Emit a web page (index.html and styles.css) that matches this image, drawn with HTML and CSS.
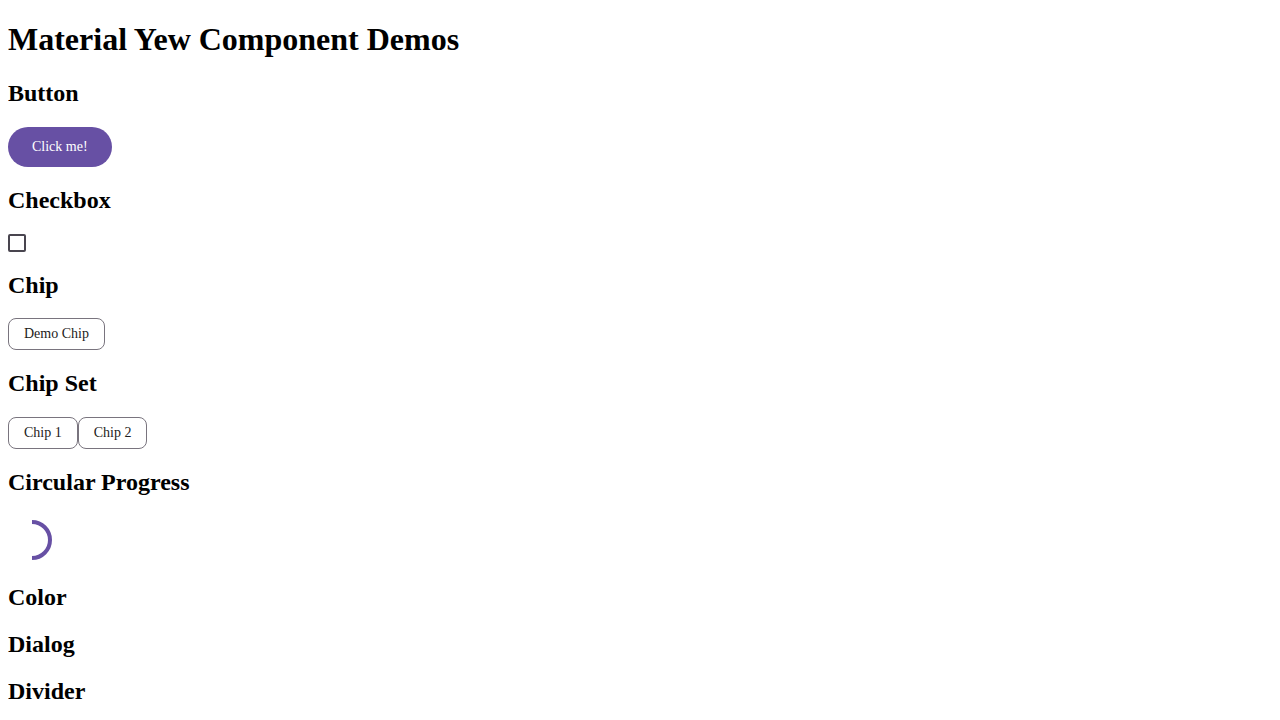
FILE: index.html
```html
<!DOCTYPE html>
<html>
<head>
<meta charset="utf-8">
<title>Material Yew Component Demos</title>
<link rel="stylesheet" href="styles.css">
</head>
<body>
<h1>Material Yew Component Demos</h1>
<h2>Button</h2>
<div class="demo"><button class="filled-btn">Click me!</button></div>
<h2>Checkbox</h2>
<div class="demo"><span class="checkbox"></span></div>
<h2>Chip</h2>
<div class="demo"><span class="chip">Demo Chip</span></div>
<h2>Chip Set</h2>
<div class="demo chipset"><span class="chip">Chip 1</span><span class="chip">Chip 2</span></div>
<h2>Circular Progress</h2>
<div class="demo">
<svg class="progress" width="48" height="48" viewBox="0 0 48 48"><path d="M24 6 A18 18 0 0 1 24 42" fill="none" stroke="#6750a4" stroke-width="4"/></svg>
</div>
<h2>Color</h2>
<h2>Dialog</h2>
<h2>Divider</h2>
</body>
</html>
```
FILE: styles.css
```css
body {
  margin: 8px;
  font-family: "Liberation Serif", serif;
  background: #fff;
  color: #000;
}
h1 { font-size: 32px; margin: 13.44px 0 21.44px; }
h2 { font-size: 24px; margin: 19.92px 0; }
.demo { display: flex; align-items: flex-start; }
.filled-btn {
  height: 40px;
  padding: 0 24px;
  border: none;
  border-radius: 20px;
  background: #6750a4;
  color: #fff;
  font-family: "Liberation Serif", serif;
  font-size: 14px;
}
.checkbox {
  display: block;
  width: 14px;
  height: 14px;
  border: 2px solid #49454f;
  border-radius: 2px;
}
.chip {
  display: inline-flex;
  align-items: center;
  height: 30px;
  padding: 0 15px;
  border: 1px solid #79747e;
  border-radius: 8px;
  font-size: 14px;
  color: #1d1b20;
}
.progress { display: block; }
```
